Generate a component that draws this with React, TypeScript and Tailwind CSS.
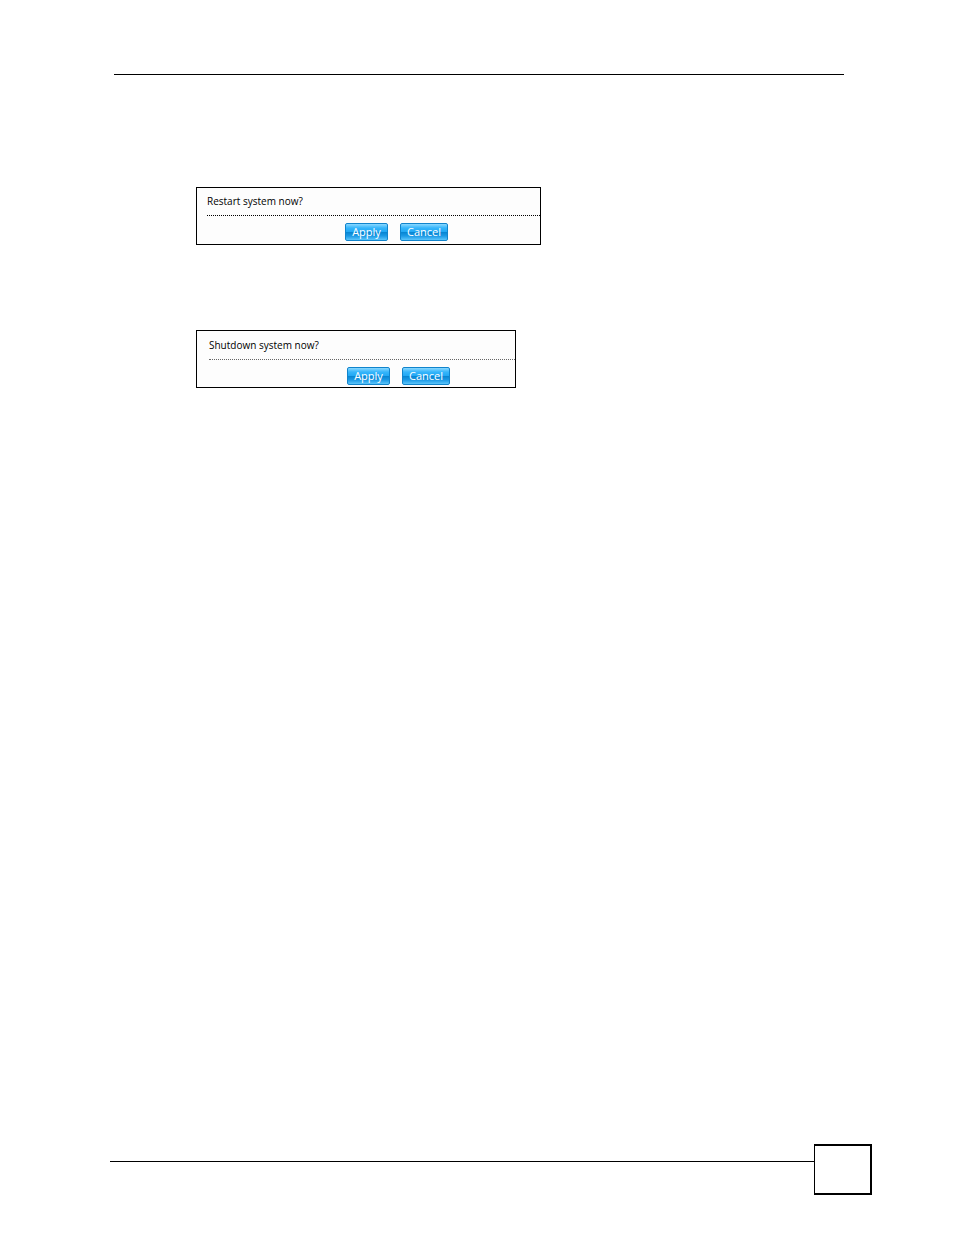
type PromptProps = {
  message: string;
  panelClass: string;
  bodyClass: string;
  ruleClass: string;
};

const buttonClass =
  "h-[18px] rounded-[2px] border border-[#1184cc] bg-[linear-gradient(to_bottom,#8ad8ff_0%,#35b5fb_25%,#22a8f4_48%,#0785d2_52%,#1c9ae6_75%,#5cc6fb_100%)] text-center font-['Open_Sans',sans-serif] text-[11px] leading-4 text-white";

function Prompt({ message, panelClass, bodyClass, ruleClass }: PromptProps) {
  return (
    <form
      aria-label={message}
      onSubmit={(event) => event.preventDefault()}
      className={`h-[58px] max-w-full border border-black bg-[#fdfdfd] ${panelClass}`}
    >
      <div className={bodyClass}>
        <p className="text-[10px] leading-[14px] text-black">{message}</p>
        <div className={`mt-[7px] border-t border-dotted ${ruleClass}`} />
        <div className="mt-[7px] flex gap-3 pl-[138px]">
          <button type="submit" className={`w-[43px] ${buttonClass}`}>
            Apply
          </button>
          <button type="button" className={`w-12 ${buttonClass}`}>
            Cancel
          </button>
        </div>
      </div>
    </form>
  );
}

export default function App() {
  return (
    <div className="flex min-h-screen flex-col bg-white pt-[74px] pb-10 font-['Open_Sans',sans-serif]">
      <header className="mr-[110px] ml-[114px] border-t border-black" />
      <main className="flex grow flex-col items-start gap-[85px] pt-28 pl-[196px]">
        <Prompt
          message="Restart system now?"
          panelClass="w-[345px]"
          bodyClass="pt-[6px] pl-[10px]"
          ruleClass="border-black"
        />
        <Prompt
          message="Shutdown system now?"
          panelClass="w-80"
          bodyClass="pt-[7px] pl-3"
          ruleClass="border-[#666666]"
        />
      </main>
      <footer className="mr-[82px] ml-[110px] flex items-start">
        <div className="mt-[17px] grow border-t border-black" />
        <div className="h-[51px] w-[58px] border-2 border-l border-black" />
      </footer>
    </div>
  );
}
